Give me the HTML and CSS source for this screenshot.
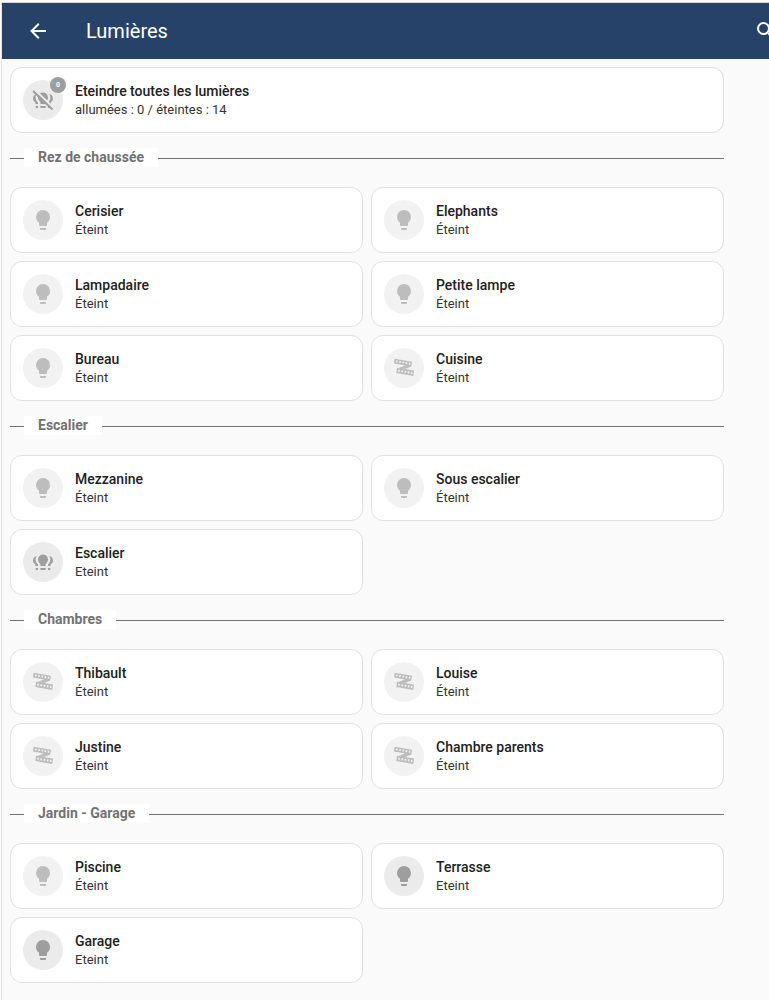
FILE: index.html
```html
<!DOCTYPE html>
<html lang="fr">
<head>
<meta charset="utf-8">
<meta name="viewport" content="width=device-width, initial-scale=1">
<title>Lumières</title>
<link rel="stylesheet" href="styles.css">
</head>
<body>
<svg class="defs" aria-hidden="true">
  <symbol id="bulb" viewBox="0 0 24 24"><path d="M12,2A7,7 0 0,0 5,9C5,11.38 6.19,13.47 8,14.74V17A1,1 0 0,0 9,18H15A1,1 0 0,0 16,17V14.74C17.81,13.47 19,11.38 19,9A7,7 0 0,0 12,2M9,21A1,1 0 0,0 10,22H14A1,1 0 0,0 15,21V20H9V21Z"/></symbol>
  <symbol id="group" viewBox="0 0 24 24"><path d="M12,4.500A5,5 0 0,0 7,9.500C7,11.400 8,12.900 9.300,13.800V15.200A.8,.8 0 0,0 10.100,16H13.900A.8,.8 0 0,0 14.700,15.200V13.800C16,12.900 17,11.400 17,9.500A5,5 0 0,0 12,4.500M9.300,18H14.700V19A1,1 0 0,1 13.700,20H10.300A1,1 0 0,1 9.300,19ZM5.800,6.100C3.600,6.600 2,8.400 2,10.500C2,12.200 2.900,13.500 4.300,14.300V15.200A.8,.8 0 0,0 5.100,16H7V14.600C5.600,13.300 4.600,11.500 4.600,9.500C4.600,8.200 5.100,7 5.800,6.100M4.600,18H7V20H5.600A1,1 0 0,1 4.600,19ZM18.200,6.100C20.400,6.600 22,8.400 22,10.500C22,12.200 21.100,13.500 19.700,14.300V15.200A.8,.8 0 0,1 18.900,16H17V14.600C18.400,13.300 19.400,11.500 19.400,9.500C19.400,8.200 18.900,7 18.200,6.100M17,18H19.400V19A1,1 0 0,1 18.400,20H17Z"/></symbol>
  <symbol id="strip" viewBox="0 0 24 24"><path fill-rule="evenodd" d="M2.600,2.700L20,5.700L19.300,10.600L13,13L22,14.600L21.300,20L4.300,17L5,11.800L6.500,12L13,9.400L2,7.500ZM4.200,4.400L3.900,6.200L5.500,6.500L5.800,4.700ZM7.400,5L7.100,6.800L8.700,7.100L9,5.300ZM10.600,5.500L10.300,7.300L11.900,7.600L12.200,5.800ZM13.800,6.100L13.500,7.900L15.100,8.200L15.400,6.400ZM17,6.600L16.700,8.400L18.200,8.700L18.500,6.900ZM6.400,13.600L6.100,15.500L7.700,15.800L8,13.900ZM9.600,14.200L9.300,16.100L10.900,16.400L11.200,14.500ZM12.800,14.700L12.500,16.600L14.100,16.900L14.400,15ZM16,15.300L15.700,17.200L17.300,17.500L17.600,15.600ZM19.100,15.800L18.800,17.700L20.200,18L20.500,16.100Z"/></symbol>
</svg>
<div class="app">
  <header class="toolbar">
    <button class="tool" type="button" aria-label="Retour"><svg class="icon" viewBox="0 0 24 24"><path d="M20,11V13H8L13.500,18.500L12.080,19.920L4.160,12L12.080,4.080L13.500,5.500L8,11H20Z"/></svg></button>
    <h1 class="title">Lumières</h1>
    <button class="tool search" type="button" aria-label="Rechercher"><svg class="icon" viewBox="0 0 24 24"><path d="M9.500,3A6.500,6.500 0 0,1 16,9.500C16,11.110 15.410,12.590 14.440,13.730L14.710,14H15.500L20.500,19L19,20.500L14,15.500V14.710L13.730,14.440C12.590,15.410 11.110,16 9.500,16A6.500,6.500 0 0,1 3,9.500A6.500,6.500 0 0,1 9.500,3M9.500,5C7,5 5,7 5,9.500C5,12 7,14 9.500,14C12,14 14,12 14,9.500C14,7 12,5 9.500,5Z"/></svg></button>
  </header>
  <main class="content">
    <button class="card on" type="button"><span class="shape"><svg class="icon" viewBox="0 0 24 24"><use href="#group"/><path class="cut" d="M3.400,1.600L23,20.200"/><path class="slash" d="M2,3L21.500,21.500"/></svg><span class="badge">0</span></span><span class="info"><span class="name">Eteindre toutes les lumières</span><span class="state">allumées : 0 / éteintes : 14</span></span></button>

    <h2 class="section"><span class="label">Rez de chaussée</span></h2>
    <div class="grid">
      <button class="card" type="button"><span class="shape"><svg class="icon"><use href="#bulb"/></svg></span><span class="info"><span class="name">Cerisier</span><span class="state">Éteint</span></span></button>
      <button class="card" type="button"><span class="shape"><svg class="icon"><use href="#bulb"/></svg></span><span class="info"><span class="name">Elephants</span><span class="state">Éteint</span></span></button>
      <button class="card" type="button"><span class="shape"><svg class="icon"><use href="#bulb"/></svg></span><span class="info"><span class="name">Lampadaire</span><span class="state">Éteint</span></span></button>
      <button class="card" type="button"><span class="shape"><svg class="icon"><use href="#bulb"/></svg></span><span class="info"><span class="name">Petite lampe</span><span class="state">Éteint</span></span></button>
      <button class="card" type="button"><span class="shape"><svg class="icon"><use href="#bulb"/></svg></span><span class="info"><span class="name">Bureau</span><span class="state">Éteint</span></span></button>
      <button class="card" type="button"><span class="shape"><svg class="icon"><use href="#strip"/></svg></span><span class="info"><span class="name">Cuisine</span><span class="state">Éteint</span></span></button>
    </div>

    <h2 class="section"><span class="label">Escalier</span></h2>
    <div class="grid">
      <button class="card" type="button"><span class="shape"><svg class="icon"><use href="#bulb"/></svg></span><span class="info"><span class="name">Mezzanine</span><span class="state">Éteint</span></span></button>
      <button class="card" type="button"><span class="shape"><svg class="icon"><use href="#bulb"/></svg></span><span class="info"><span class="name">Sous escalier</span><span class="state">Éteint</span></span></button>
      <button class="card on" type="button"><span class="shape"><svg class="icon"><use href="#group"/></svg></span><span class="info"><span class="name">Escalier</span><span class="state">Eteint</span></span></button>
    </div>

    <h2 class="section"><span class="label">Chambres</span></h2>
    <div class="grid">
      <button class="card" type="button"><span class="shape"><svg class="icon"><use href="#strip"/></svg></span><span class="info"><span class="name">Thibault</span><span class="state">Éteint</span></span></button>
      <button class="card" type="button"><span class="shape"><svg class="icon"><use href="#strip"/></svg></span><span class="info"><span class="name">Louise</span><span class="state">Éteint</span></span></button>
      <button class="card" type="button"><span class="shape"><svg class="icon"><use href="#strip"/></svg></span><span class="info"><span class="name">Justine</span><span class="state">Éteint</span></span></button>
      <button class="card" type="button"><span class="shape"><svg class="icon"><use href="#strip"/></svg></span><span class="info"><span class="name">Chambre parents</span><span class="state">Éteint</span></span></button>
    </div>

    <h2 class="section"><span class="label">Jardin - Garage</span></h2>
    <div class="grid">
      <button class="card" type="button"><span class="shape"><svg class="icon"><use href="#bulb"/></svg></span><span class="info"><span class="name">Piscine</span><span class="state">Éteint</span></span></button>
      <button class="card on" type="button"><span class="shape"><svg class="icon"><use href="#bulb"/></svg></span><span class="info"><span class="name">Terrasse</span><span class="state">Eteint</span></span></button>
      <button class="card on" type="button"><span class="shape"><svg class="icon"><use href="#bulb"/></svg></span><span class="info"><span class="name">Garage</span><span class="state">Eteint</span></span></button>
    </div>
  </main>
</div>
</body>
</html>
```
FILE: styles.css
```css
* {
  box-sizing: border-box;
}

body {
  margin: 0;
  padding: 2px 0 0 1px;
  background: #fff;
  color: #212121;
  font-family: Roboto, "Liberation Sans", sans-serif;
}

.defs {
  display: none;
}

.app {
  min-height: calc(100vh - 2px);
  border-top: 1px solid #d5d5d5;
  border-left: 1px solid #e0e0e0;
  background: #fafafa;
  overflow: hidden;
}

.toolbar {
  display: flex;
  align-items: center;
  height: 56px;
  padding-left: 12px;
  background: #264269;
  color: #fff;
}

.tool {
  display: flex;
  flex: none;
  padding: 12px;
  border: 0;
  background: none;
  color: inherit;
}

.title {
  flex: 1;
  margin: 0 0 0 24px;
  font-size: 20px;
  font-weight: 400;
  line-height: 28px;
}

/* The search action runs past the right edge of the bar. */
.search {
  margin-right: -21px;
}

.icon {
  display: block;
  width: 24px;
  height: 24px;
  fill: currentColor;
}

.content {
  padding: 8px 45px 16px 8px;
}

.grid {
  display: grid;
  grid-template-columns: 1fr 1fr;
  gap: 8px;
}

.card {
  display: flex;
  align-items: center;
  gap: 12px;
  width: 100%;
  padding: 12px;
  border: 1px solid #e0e0e0;
  border-radius: 12px;
  background: #fff;
  color: inherit;
  font-family: inherit;
  text-align: left;
}

.shape {
  position: relative;
  display: flex;
  flex: none;
  align-items: center;
  justify-content: center;
  width: 40px;
  height: 40px;
  border-radius: 50%;
  background: #f2f2f2;
  color: #bdbdbd;
}

.on .shape {
  background: #ebebeb;
  color: #9e9e9e;
}

.badge {
  position: absolute;
  top: -3px;
  right: -3px;
  width: 16px;
  height: 16px;
  border-radius: 50%;
  background: #9e9e9e;
  color: #fff;
  font-size: 7px;
  font-weight: 700;
  line-height: 16px;
  text-align: center;
}

.slash {
  fill: none;
  stroke: currentColor;
  stroke-width: 2;
}

.cut {
  fill: none;
  stroke: #ebebeb;
  stroke-width: 2;
}

.info {
  display: flex;
  flex-direction: column;
  min-width: 0;
}

.name {
  font-size: 14px;
  font-weight: 500;
  line-height: 20px;
}

.state {
  color: #333;
  font-size: 13px;
  font-weight: 400;
  line-height: 18px;
}

.section {
  display: flex;
  align-items: center;
  height: 54px;
  margin: 0;
  padding-bottom: 4px;
  color: #727272;
  font-size: 14px;
  font-weight: 700;
  line-height: 19px;
}

.section::before,
.section::after {
  content: "";
  width: 14px;
  height: 1px;
  background: #727272;
}

.section::after {
  flex: 1;
}

.label {
  margin-bottom: 2px;
  padding: 0 14px;
  background: #fff;
}
```
